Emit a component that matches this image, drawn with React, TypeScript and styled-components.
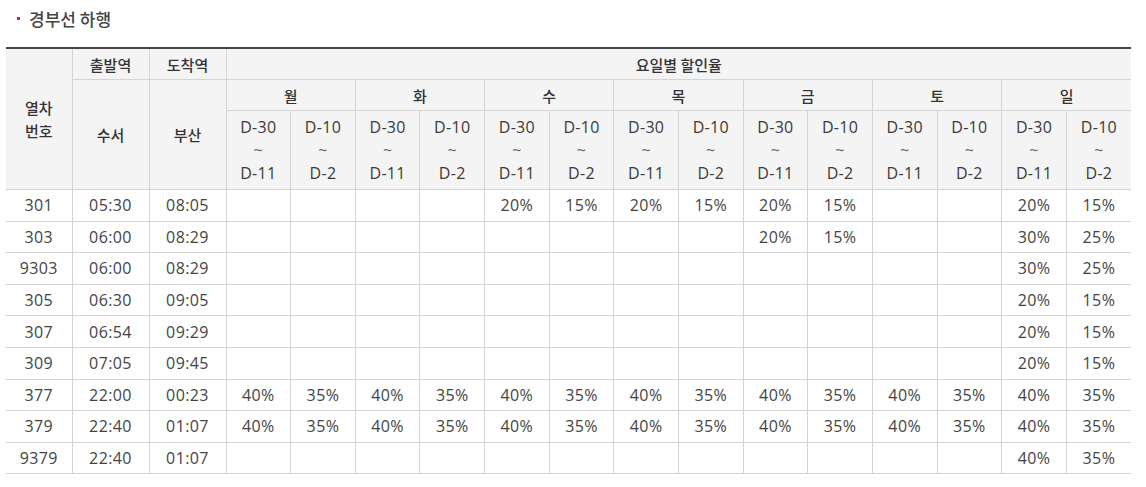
import React from "react";
import styled, { createGlobalStyle } from "styled-components";

const GlobalStyle = createGlobalStyle`
  html, body {
    margin: 0;
    padding: 0;
    background: #fff;
  }
  body {
    font-family: "Open Sans", "Noto Sans CJK KR", sans-serif;
    color: #333;
  }
`;

const Wrap = styled.div`
  padding: 6px 15px 0 6px;
`;

const Title = styled.h3`
  display: flex;
  align-items: center;
  margin: 0 0 17px 0;
  padding-left: 11px;
  height: 24px;
  font-family: "Noto Sans CJK KR", sans-serif;
  font-size: 17px;
  font-weight: 500;
  color: #444;

  &::before {
    content: "";
    width: 3px;
    height: 3px;
    background: #d6147f;
    margin-right: 9px;
    margin-top: 1px;
  }
`;

const Table = styled.table`
  width: 1125px;
  border-collapse: collapse;
  table-layout: fixed;
  border-top: 2px solid #444;
  font-size: 16px;
`;

const Th = styled.th<{ $tall?: boolean }>`
  background: #f4f4f4;
  border: 1px solid #d4d4d4;
  font-family: "Noto Sans CJK KR", "Open Sans", sans-serif;
  font-size: 15px;
  font-weight: 500;
  color: #333;
  text-align: center;
  vertical-align: middle;
  height: ${(p) => (p.$tall ? "78px" : "30px")};
  padding: 0;
  line-height: 23px;

  &:first-child {
    border-left: none;
  }
  &:last-child {
    border-right: none;
  }
`;

const PeriodTh = styled(Th)`
  font-family: "Open Sans", "Noto Sans CJK KR", sans-serif;
  font-size: 16px;
  font-weight: 400;
  letter-spacing: 0.3px;
  color: #3a3a3a;
`;

const Tilde = styled.span`
  display: block;
  font-size: 16px;
  line-height: 23px;
  color: #666;
`;

const Td = styled.td`
  border: 1px solid #d4d4d4;
  text-align: center;
  vertical-align: middle;
  height: 30.6px;
  padding: 0;
  color: #444;
  letter-spacing: 0.4px;

  &:first-child {
    border-left: none;
  }
  &:last-child {
    border-right: none;
  }
`;

const days = ["월", "화", "수", "목", "금", "토", "일"];

type Rate = [string, string] | null;

interface Train {
  no: string;
  dep: string;
  arr: string;
  rates: Rate[];
}

const e: Rate = null;
const a: Rate = ["20%", "15%"];
const b: Rate = ["30%", "25%"];
const c: Rate = ["40%", "35%"];

const trains: Train[] = [
  { no: "301", dep: "05:30", arr: "08:05", rates: [e, e, a, a, a, e, a] },
  { no: "303", dep: "06:00", arr: "08:29", rates: [e, e, e, e, a, e, b] },
  { no: "9303", dep: "06:00", arr: "08:29", rates: [e, e, e, e, e, e, b] },
  { no: "305", dep: "06:30", arr: "09:05", rates: [e, e, e, e, e, e, a] },
  { no: "307", dep: "06:54", arr: "09:29", rates: [e, e, e, e, e, e, a] },
  { no: "309", dep: "07:05", arr: "09:45", rates: [e, e, e, e, e, e, a] },
  { no: "377", dep: "22:00", arr: "00:23", rates: [c, c, c, c, c, c, c] },
  { no: "379", dep: "22:40", arr: "01:07", rates: [c, c, c, c, c, c, c] },
  { no: "9379", dep: "22:40", arr: "01:07", rates: [e, e, e, e, e, e, c] },
];

const App: React.FunctionComponent = () => {
  return (
    <Wrap>
      <GlobalStyle />
      <Title>경부선 하행</Title>
      <Table>
        <colgroup>
          <col style={{ width: 66 }} />
          <col style={{ width: 77 }} />
          <col style={{ width: 77 }} />
          {Array.from({ length: 14 }).map((_, i) => (
            <col key={i} />
          ))}
        </colgroup>
        <thead>
          <tr>
            <Th rowSpan={3}>
              열차
              <br />
              번호
            </Th>
            <Th>출발역</Th>
            <Th>도착역</Th>
            <Th colSpan={14}>요일별 할인율</Th>
          </tr>
          <tr>
            <Th rowSpan={2}>수서</Th>
            <Th rowSpan={2}>부산</Th>
            {days.map((d) => (
              <Th key={d} colSpan={2}>
                {d}
              </Th>
            ))}
          </tr>
          <tr>
            {days.map((d) => (
              <React.Fragment key={d}>
                <PeriodTh $tall>
                  D-30
                  <Tilde>~</Tilde>
                  D-11
                </PeriodTh>
                <PeriodTh $tall>
                  D-10
                  <Tilde>~</Tilde>
                  D-2
                </PeriodTh>
              </React.Fragment>
            ))}
          </tr>
        </thead>
        <tbody>
          {trains.map((t) => (
            <tr key={t.no}>
              <Td>{t.no}</Td>
              <Td>{t.dep}</Td>
              <Td>{t.arr}</Td>
              {t.rates.map((r, i) => (
                <React.Fragment key={i}>
                  <Td>{r ? r[0] : ""}</Td>
                  <Td>{r ? r[1] : ""}</Td>
                </React.Fragment>
              ))}
            </tr>
          ))}
        </tbody>
      </Table>
    </Wrap>
  );
};

export default App;
